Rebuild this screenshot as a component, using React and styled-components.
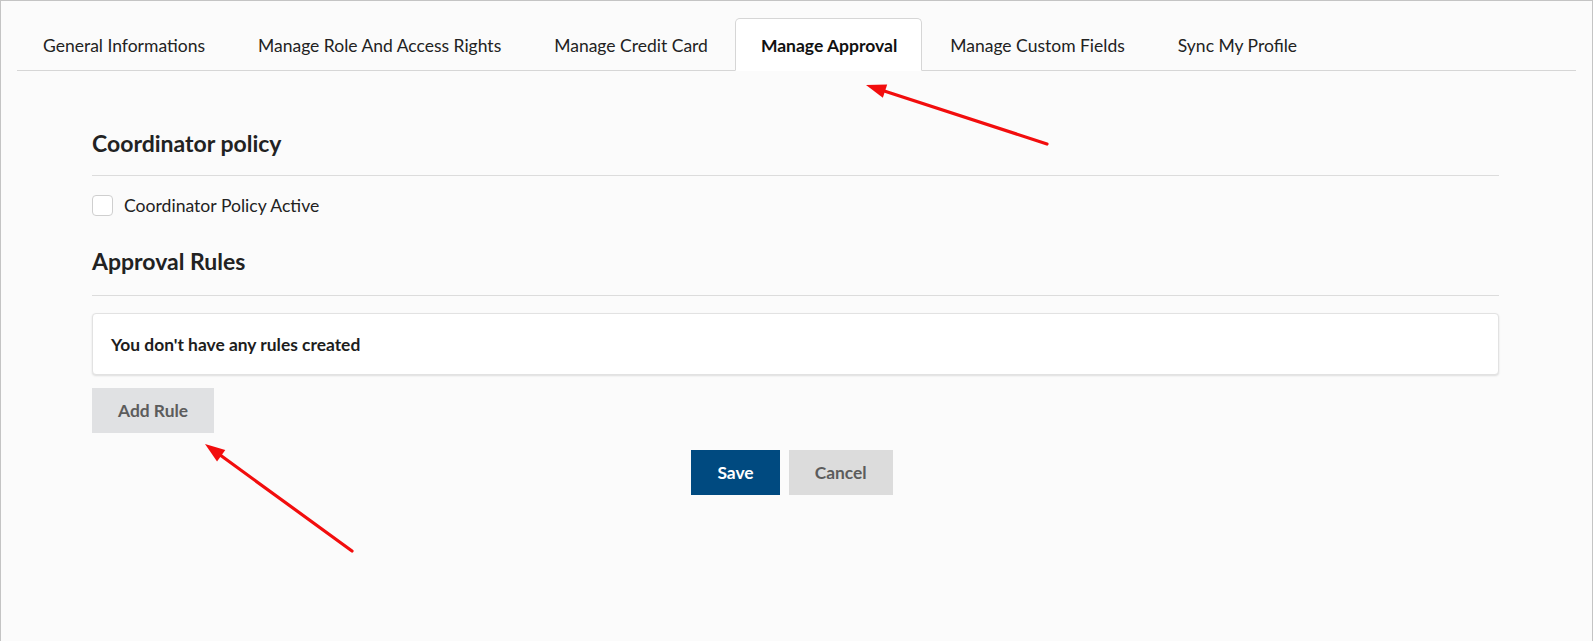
import React from "react";
import styled, { createGlobalStyle } from "styled-components";

const Global = createGlobalStyle`
  html, body { margin: 0; padding: 0; background: #fbfbfb; }
  body { font-family: Lato, "Open Sans", sans-serif; color: #222; }
  * { box-sizing: border-box; }
`;

const Frame = styled.div`
  position: relative;
  width: 1593px;
  height: 641px;
  overflow: hidden;
  background: #fbfbfb;
  border: 1px solid #c4c4c4;
  border-bottom: none;
  padding: 17px 16px 0 16px;
`;

const TabBar = styled.ul`
  display: flex;
  list-style: none;
  margin: 0;
  padding: 0;
  border-bottom: 1px solid #d6d6d6;
`;

const Tab = styled.li`
  height: 53px;
  margin-right: 2px;
  margin-bottom: -1px;
  padding: 2px 24px 0 25px;
  display: flex;
  align-items: center;
  font-size: 17.5px;
  font-weight: ${(p) => (p.$active ? 700 : 400)};
  color: ${(p) => (p.$active ? "#111" : "#222")};
  background: ${(p) => (p.$active ? "#fff" : "transparent")};
  border: 1px solid ${(p) => (p.$active ? "#d6d6d6" : "transparent")};
  border-bottom-color: ${(p) => (p.$active ? "#fff" : "transparent")};
  border-radius: 5px 5px 0 0;
  white-space: nowrap;
`;

const Content = styled.div`
  width: 1482px;
  padding: 0 0 0 75px;
`;

const SectionTitle = styled.h2`
  margin: 0;
  font-size: 23px;
  font-weight: 700;
  color: #222;
  line-height: 28px;
  padding: ${(p) => p.$top}px 0 ${(p) => p.$bottom}px;
  border-bottom: 1px solid #dcdcdc;
`;

const CheckRow = styled.label`
  display: flex;
  align-items: center;
  gap: 11px;
  height: 59px;
  font-size: 17.6px;
  color: #222;
`;

const CheckBox = styled.span`
  width: 21px;
  height: 21px;
  border: 1px solid #cfcfcf;
  border-radius: 4px;
  background: #fff;
`;

const EmptyCard = styled.div`
  margin-top: 17px;
  height: 62px;
  background: #fff;
  border: 1px solid #e2e2e2;
  border-radius: 4px;
  box-shadow: 0 1px 2px rgba(0, 0, 0, 0.12);
  display: flex;
  align-items: center;
  padding: 0 18px;
  font-size: 17.4px;
  font-weight: 700;
  color: #1d1d1d;
`;

const Button = styled.button`
  height: 45px;
  border: none;
  border-radius: 0;
  font-family: Lato, "Open Sans", sans-serif;
  font-size: 17.4px;
  font-weight: 700;
  padding: 0 ${(p) => p.$pad}px;
  background: ${(p) => p.$bg};
  color: ${(p) => p.$fg};
  cursor: pointer;
`;

const AddRow = styled.div`
  margin-top: 13px;
`;

const Actions = styled.div`
  display: flex;
  justify-content: center;
  gap: 9px;
  margin-top: 17px;
  padding-right: 7px;
`;

const Annotation = styled.svg`
  position: absolute;
  left: 0;
  top: 0;
  pointer-events: none;
`;

function Arrow({ x1, y1, x2, y2 }) {
  const ang = Math.atan2(y2 - y1, x2 - x1);
  const len = 20;
  const w = 7;
  const bx = x2 - len * Math.cos(ang);
  const by = y2 - len * Math.sin(ang);
  const px = -Math.sin(ang) * w;
  const py = Math.cos(ang) * w;
  const pts = `${x2},${y2} ${bx + px},${by + py} ${bx - px},${by - py}`;
  return (
    <g>
      <line x1={x1} y1={y1} x2={bx} y2={by} stroke="#f20d0d" strokeWidth="3.2" strokeLinecap="round" />
      <polygon points={pts} fill="#f20d0d" />
    </g>
  );
}

const tabs = [
  "General Informations",
  "Manage Role And Access Rights",
  "Manage Credit Card",
  "Manage Approval",
  "Manage Custom Fields",
  "Sync My Profile",
];

export default function App() {
  return (
    <>
      <Global />
      <Frame>
        <TabBar>
          {tabs.map((t) => (
            <Tab key={t} $active={t === "Manage Approval"}>
              {t}
            </Tab>
          ))}
        </TabBar>
        <Content>
          <SectionTitle $top={58} $bottom={18}>Coordinator policy</SectionTitle>
          <CheckRow>
            <CheckBox />
            Coordinator Policy Active
          </CheckRow>
          <SectionTitle $top={12} $bottom={20}>Approval Rules</SectionTitle>
          <EmptyCard>You don't have any rules created</EmptyCard>
          <AddRow>
            <Button $bg="#e0e1e3" $fg="#5c5c5c" $pad={26}>Add Rule</Button>
          </AddRow>
          <Actions>
            <Button $bg="#004a80" $fg="#fff" $pad={26}>Save</Button>
            <Button $bg="#dcdcdc" $fg="#5c5c5c" $pad={26}>Cancel</Button>
          </Actions>
        </Content>
        <Annotation width="1593" height="641" viewBox="0 0 1593 641">
          <Arrow x1={1046} y1={143} x2={865} y2={84} />
          <Arrow x1={351} y1={550} x2={204} y2={443} />
        </Annotation>
      </Frame>
    </>
  );
}
